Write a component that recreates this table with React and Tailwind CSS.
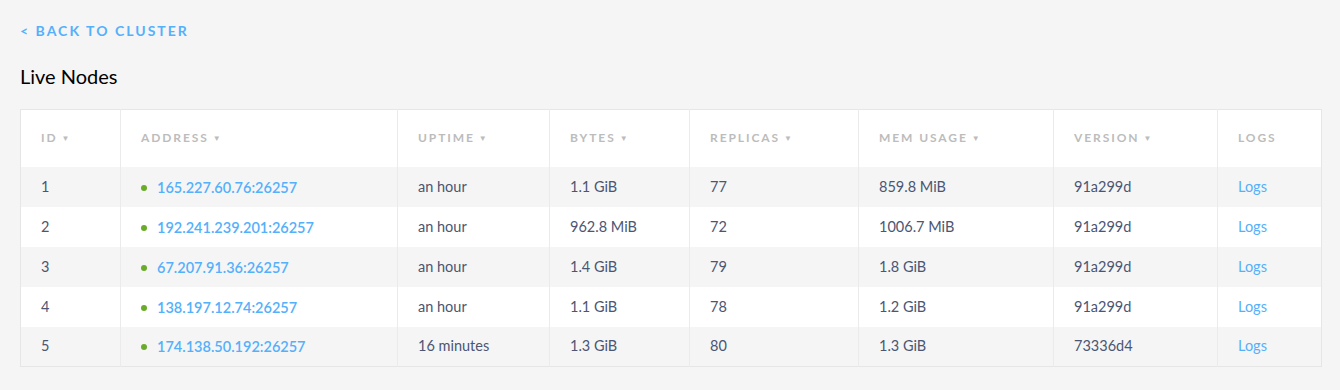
import React from 'react';

const nodes = [
  { id: 1, address: '165.227.60.76:26257', uptime: 'an hour', bytes: '1.1 GiB', replicas: 77, mem: '859.8 MiB', version: '91a299d' },
  { id: 2, address: '192.241.239.201:26257', uptime: 'an hour', bytes: '962.8 MiB', replicas: 72, mem: '1006.7 MiB', version: '91a299d' },
  { id: 3, address: '67.207.91.36:26257', uptime: 'an hour', bytes: '1.4 GiB', replicas: 79, mem: '1.8 GiB', version: '91a299d' },
  { id: 4, address: '138.197.12.74:26257', uptime: 'an hour', bytes: '1.1 GiB', replicas: 78, mem: '1.2 GiB', version: '91a299d' },
  { id: 5, address: '174.138.50.192:26257', uptime: '16 minutes', bytes: '1.3 GiB', replicas: 80, mem: '1.3 GiB', version: '73336d4' },
];

const columns = [
  { label: 'ID', width: 'w-[100px]', sort: true },
  { label: 'Address', width: 'w-[277px]', sort: true },
  { label: 'Uptime', width: 'w-[152px]', sort: true },
  { label: 'Bytes', width: 'w-[140px]', sort: true },
  { label: 'Replicas', width: 'w-[169px]', sort: true },
  { label: 'Mem Usage', width: 'w-[195px]', sort: true },
  { label: 'Version', width: 'w-[164px]', sort: true },
  { label: 'Logs', width: 'w-[104px]', sort: false },
];

const cell = 'h-10 pl-5 border-l border-[#ebebeb] first:border-l-0';

const App = () => {
  return (
    <div className="min-h-screen bg-[#f5f5f5] px-5 pt-[21px] pb-6 font-['Lato',sans-serif]">
      {/* BACK LINK */}
      <a href="#" className="block text-[14px] leading-5 font-bold uppercase tracking-[0.145em] text-[#54b0fb]">
        &lt; Back to Cluster
      </a>

      {/* TITLE */}
      <h1 className="mt-[23px] text-[20px] leading-6 text-black">Live Nodes</h1>

      {/* TABLE */}
      <table className="mt-[21px] w-[1301px] table-fixed border border-[#e6e6e6] border-collapse bg-white">
        <thead>
          <tr>
            {columns.map((col) => (
              <th
                key={col.label}
                className={`${col.width} h-[57px] pl-5 text-left align-middle border-l border-[#ebebeb] first:border-l-0 text-[12px] font-bold uppercase tracking-[0.16em] text-[#bcbcbc]`}
              >
                {col.label}
                {col.sort && <span className="ml-[4px] text-[8px] align-[1px]">▼</span>}
              </th>
            ))}
          </tr>
        </thead>
        <tbody className="text-[14.5px] text-[#4a5673]">
          {nodes.map((n, i) => (
            <tr key={n.id} className={i % 2 === 0 ? 'bg-[#f5f5f5]' : 'bg-white'}>
              <td className={cell}>{n.id}</td>
              <td className={cell}>
                <span className="inline-flex items-center gap-[10px]">
                  <span className="w-[6px] h-[6px] rounded-full bg-[#6aab2a]" />
                  <a href="#" className="font-semibold text-[#54b0fb]">{n.address}</a>
                </span>
              </td>
              <td className={cell}>{n.uptime}</td>
              <td className={cell}>{n.bytes}</td>
              <td className={cell}>{n.replicas}</td>
              <td className={cell}>{n.mem}</td>
              <td className={cell}>{n.version}</td>
              <td className={cell}>
                <a href="#" className="text-[#54b0fb]">Logs</a>
              </td>
            </tr>
          ))}
        </tbody>
      </table>
    </div>
  );
};

export default App;
